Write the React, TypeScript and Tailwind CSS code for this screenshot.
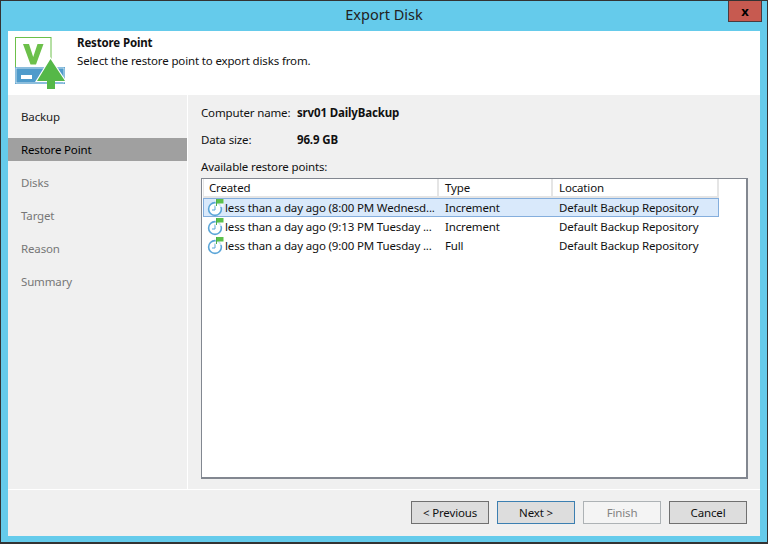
const font = { fontFamily: '"Noto Sans", "Liberation Sans", sans-serif' };

const steps = ['Backup', 'Restore Point', 'Disks', 'Target', 'Reason', 'Summary'];
const points = [
  { created: 'less than a day ago (8:00 PM Wednesd...', type: 'Increment' },
  { created: 'less than a day ago (9:13 PM Tuesday ...', type: 'Increment' },
  { created: 'less than a day ago (9:00 PM Tuesday ...', type: 'Full' },
];

function Logo() {
  return (
    <svg width="50" height="52" viewBox="0 0 50 52" className="block shrink-0">
      <rect x="0.5" y="0.5" width="35.5" height="30" fill="#fff" stroke="#6cc04a" />
      <path d="M8 7h6l4.2 13L22.5 7H28.5l-7.5 20.5h-5.5z" fill="#6cc04a" />
      <rect x="0" y="30" width="50" height="17" fill="#4f9bcb" />
      <rect x="1" y="31" width="48" height="15" fill="none" stroke="#fff" strokeWidth="0.7" />
      <rect x="6" y="38" width="11" height="4" fill="#fff" />
      <path d="M35.5 20 L52 45 H20z" fill="#fff" />
      <path d="M35.5 22 L50 44 H40 V52 H32 V44 H22z" fill="#55b848" />
    </svg>
  );
}

function PointIcon() {
  return (
    <svg width="18" height="18" viewBox="0 0 18 18" className="shrink-0 block">
      <circle cx="9" cy="10" r="6.4" fill="#fff" stroke="#5aa5d8" strokeWidth="1.6" />
      <path d="M9 6.5v4.5H6" fill="none" stroke="#5aa5d8" strokeWidth="1" />
      <rect x="9.5" y="0" width="8" height="8" fill="#fff" fillOpacity="0.7" />
      <rect x="10" y="0" width="1" height="7" fill="#4cae4c" />
      <path d="M11 0h6.5v4.5H11z" fill="#5cc04c" />
    </svg>
  );
}

function Btn({ label, variant }: { label: string; variant?: 'default' | 'disabled' }) {
  const cls =
    variant === 'default'
      ? 'border-[#3c7fb1] bg-[#dddddd] text-[#111]'
      : variant === 'disabled'
        ? 'border-[#adb2b5] bg-[#f4f4f4] text-[#838383]'
        : 'border-[#707070] bg-[#dddddd] text-[#111]';
  return (
    <button className={`w-[78px] h-[23px] border text-[11.5px] tracking-[-0.15px] leading-none ${cls}`} style={font}>
      {label}
    </button>
  );
}

export default function App() {
  return (
    <div className="w-[768px] h-[544px] bg-[#65cbeb] border border-[#333] border-b-2 flex flex-col overflow-hidden text-[11.5px] tracking-[-0.15px] text-[#111]" style={font}>
      <div className="h-[30px] shrink-0 relative flex items-center justify-center text-[14.5px] tracking-normal text-[#222] pb-[3px]">
        Export Disk
        <div className="absolute right-[5px] top-0 w-[34px] h-[21px] bg-[#c75a50] border border-t-0 border-[#4a3a3e] flex items-center justify-center text-[13px] font-bold leading-none text-black">
          x
        </div>
      </div>
      <div className="mx-[7px] mb-[6px] flex-1 flex flex-col bg-[#f0f0f0] min-h-0">
        <div className="h-[64px] shrink-0 bg-white flex pl-[7px] pt-[6px] gap-[12px]">
          <Logo />
          <div className="-mt-[2px]">
            <div className="font-bold leading-[16px]">Restore Point</div>
            <div className="leading-[16px] mt-[2px]">Select the restore point to export disks from.</div>
          </div>
        </div>
        <div className="flex-1 flex min-h-0">
          <div className="w-[179px] shrink-0 pt-[10px]">
            {steps.map((s, i) => (
              <div
                key={s}
                className={`h-[23px] mb-[10px] flex items-center pl-[13px] ${i === 1 ? 'bg-[#a0a0a0] text-black' : i === 0 ? 'text-[#222]' : 'text-[#777]'}`}
              >
                {s}
              </div>
            ))}
          </div>
          <div className="flex-1 flex flex-col border-l border-white min-w-0">
            <div className="flex-1 flex flex-col pl-[13px] pr-[12px] pt-[9px] pb-[10px] min-h-0">
              <div className="flex h-[18px] items-center">
                <span className="w-[96px]">Computer name:</span>
                <span className="font-bold">srv01 DailyBackup</span>
              </div>
              <div className="flex h-[18px] items-center mt-[9px]">
                <span className="w-[96px]">Data size:</span>
                <span className="font-bold">96.9 GB</span>
              </div>
              <div className="h-[18px] mt-[9px] flex items-center">Available restore points:</div>
              <div className="mt-[2px] flex-1 bg-white border border-[#828790] border-r-2 border-b-2 pl-[1px] min-h-0">
                <div className="flex w-[516px] h-[19px] border-b-2 border-[#e5e5e5]">
                  <div className="w-[236px] border-r-2 border-l border-[#e5e5e5] pl-[5px] flex items-center">Created</div>
                  <div className="w-[114px] border-r-2 border-[#e5e5e5] pl-[6px] flex items-center">Type</div>
                  <div className="flex-1 border-r-2 border-[#e5e5e5] pl-[6px] flex items-center">Location</div>
                </div>
                {points.map((p, i) => (
                  <div
                    key={p.created}
                    className={`flex w-[516px] h-[19px] items-center border ${i === 0 ? 'bg-[#d9e9fb] border-[#84aedd]' : 'border-transparent'}`}
                  >
                    <div className="w-[235px] flex items-center gap-[1px] pl-[2px] whitespace-nowrap overflow-hidden">
                      <PointIcon />
                      <span>{p.created}</span>
                    </div>
                    <div className="w-[114px] pl-[6px]">{p.type}</div>
                    <div className="flex-1 pl-[6px] whitespace-nowrap">Default Backup Repository</div>
                  </div>
                ))}
              </div>
            </div>
          </div>
        </div>
        <div className="h-[47px] shrink-0 border-t border-white flex items-start justify-end gap-[8px] pt-[11px] pr-[13px]">
          <Btn label="< Previous" />
          <Btn label="Next >" variant="default" />
          <Btn label="Finish" variant="disabled" />
          <Btn label="Cancel" />
        </div>
      </div>
    </div>
  );
}
